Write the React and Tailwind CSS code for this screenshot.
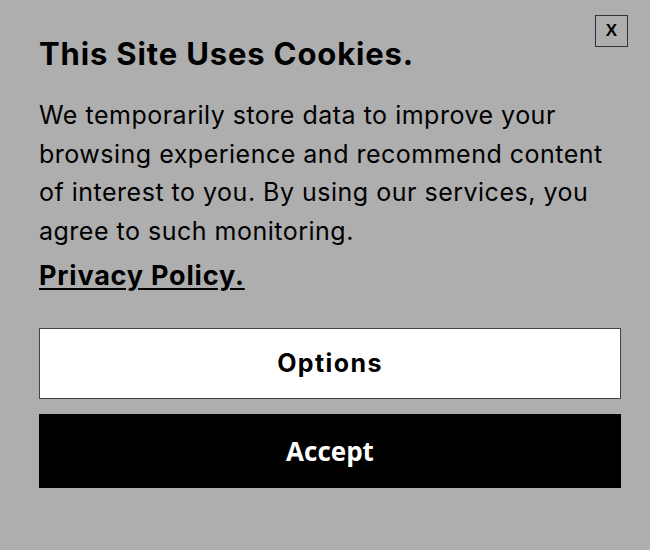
import React from "react";

const CookieBanner = () => {
  return (
    <div className="w-[650px] h-[550px] bg-[#aeaeae] relative font-['Inter',sans-serif] text-black">
      <button className="absolute top-[15px] right-[22px] w-[33px] h-[32px] border border-[#333] flex items-center justify-center text-[17px] font-bold font-['Liberation_Sans',sans-serif]">
        X
      </button>
      <div className="pl-[39px] pr-[29px] pt-[34px]">
        <h2 className="text-[31px] font-bold leading-[40px] tracking-[0.85px]">This Site Uses Cookies.</h2>
        <p className="mt-[22px] text-[25px] leading-[38.5px] font-normal tracking-[0.5px]">
          We temporarily store data to improve your browsing experience and recommend content of interest to you. By using our services, you agree to such monitoring.
        </p>
        <a href="#" className="block mt-[8px] text-[27px] leading-[36px] font-bold tracking-[0.8px] underline underline-offset-[3px]">
          Privacy Policy.
        </a>
        <div className="mt-[34px] flex flex-col gap-[15px]">
          <button className="w-full h-[71px] bg-white border border-[#444] text-[25px] font-bold tracking-[1.4px]">Options</button>
          <button className="w-full h-[74px] bg-black text-white text-[26px] font-bold font-['Open_Sans',sans-serif]">Accept</button>
        </div>
      </div>
    </div>
  );
};

export default function App() {
  return <CookieBanner />;
}
